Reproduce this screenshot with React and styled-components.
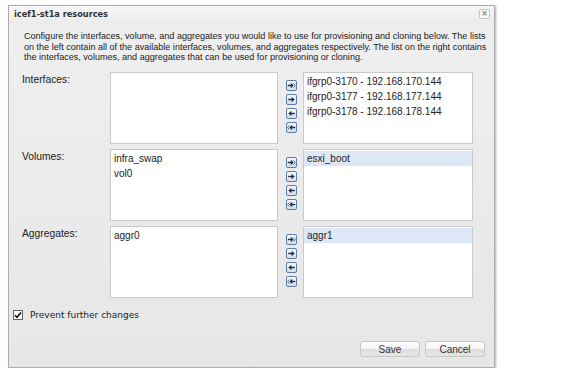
import React from 'react'
import styled, { createGlobalStyle } from 'styled-components'

const GlobalStyle = createGlobalStyle`
  html, body {
    margin: 0;
    background: #fff;
  }
  body {
    font-family: "Liberation Sans", Arial, sans-serif;
  }
`

const rows = [
  {
    label: 'Interfaces:',
    available: [],
    chosen: [
      'ifgrp0-3170 - 192.168.170.144',
      'ifgrp0-3177 - 192.168.177.144',
      'ifgrp0-3178 - 192.168.178.144',
    ],
    selected: -1,
  },
  { label: 'Volumes:', available: ['infra_swap', 'vol0'], chosen: ['esxi_boot'], selected: 0 },
  { label: 'Aggregates:', available: ['aggr0'], chosen: ['aggr1'], selected: 0 },
]

function MoveIcon({ dir, all }) {
  const flip = dir === 'left' ? 'translate(9 0) scale(-1 1)' : undefined
  return (
    <svg width="9" height="9" viewBox="0 0 9 9">
      <g transform={flip}>
        {all ? (
          <>
            <path d="M0.8 4.5H4.2" stroke="#1d2b3f" strokeWidth="1.4" />
            <polygon points="3.8,1.8 6.6,4.5 3.8,7.2" fill="#1d2b3f" />
            <polyline points="6.4,2.4 8.4,4.5 6.4,6.6" fill="none" stroke="#5b6b80" strokeWidth="1" />
          </>
        ) : (
          <>
            <path d="M1.2 4.5H5" stroke="#1d2b3f" strokeWidth="1.4" />
            <polygon points="4.6,1.8 7.6,4.5 4.6,7.2" fill="#1d2b3f" />
          </>
        )}
      </g>
    </svg>
  )
}

function ResourcesDialog() {
  return (
    <Dialog>
      <Header>
        <Title>icef1-st1a resources</Title>
        <Close>×</Close>
      </Header>
      <Body>
        <Description>
          Configure the interfaces, volume, and aggregates you would like to use for provisioning and cloning below. The lists
          <br />
          on the left contain all of the available interfaces, volumes, and aggregates respectively. The list on the right contains
          <br />
          the interfaces, volumes, and aggregates that can be used for provisioning or cloning.
        </Description>

        <Grid>
          {rows.map((row) => (
            <React.Fragment key={row.label}>
              <Label>{row.label}</Label>
              <ListBox>
                {row.available.map((item) => (
                  <Item key={item}>{item}</Item>
                ))}
              </ListBox>
              <Mover>
                <ArrowButton title="Add all"><MoveIcon dir="right" all /></ArrowButton>
                <ArrowButton title="Add"><MoveIcon dir="right" /></ArrowButton>
                <ArrowButton title="Remove"><MoveIcon dir="left" /></ArrowButton>
                <ArrowButton title="Remove all"><MoveIcon dir="left" all /></ArrowButton>
              </Mover>
              <ListBox>
                {row.chosen.map((item, i) => (
                  <Item key={item} $selected={i === row.selected}>{item}</Item>
                ))}
              </ListBox>
            </React.Fragment>
          ))}
        </Grid>
      </Body>

      <CheckRow>
        <Check>
          <svg width="8" height="8" viewBox="0 0 8 8">
            <polyline points="1,4.2 3,6.3 7,1.4" fill="none" stroke="#111" strokeWidth="1.6" />
          </svg>
        </Check>
        <CheckLabel>Prevent further changes</CheckLabel>
      </CheckRow>

      <Footer>
        <Button>Save</Button>
        <Button>Cancel</Button>
      </Footer>
    </Dialog>
  )
}

export default function App() {
  return (
    <Page>
      <GlobalStyle />
      <ResourcesDialog />
    </Page>
  )
}

const Page = styled.div`
  padding: 5px 0 0 8px;
`

const Dialog = styled.div`
  box-sizing: border-box;
  width: 487px;
  height: 363px;
  display: flex;
  flex-direction: column;
  border: 1px solid #acacac;
  background: linear-gradient(#efefef, #e7e7e7);
  box-shadow: 1px 1px 2px rgba(0, 0, 0, 0.3);
`

const Header = styled.div`
  height: 19px;
  display: flex;
  justify-content: space-between;
  align-items: flex-start;
  padding: 0 4px 0 5px;
  background: linear-gradient(#f6f6f6, #ebebeb);
`

const Title = styled.div`
  font-family: "DejaVu Sans", sans-serif;
  font-weight: bold;
  font-size: 8.2px;
  line-height: 17px;
  color: #333;
`

const Close = styled.div`
  box-sizing: border-box;
  margin-top: 3px;
  width: 11px;
  height: 10px;
  border: 1px solid #c4c4c4;
  border-radius: 2px;
  background: #f8f8f8;
  color: #666;
  font-size: 10px;
  line-height: 7px;
  text-align: center;
`

const Body = styled.div`
  padding: 6px 0 0 13px;
`

const Description = styled.p`
  margin: 0 0 0 2px;
  font-size: 9.05px;
  line-height: 10.6px;
  color: #222;
  white-space: nowrap;
`

const Grid = styled.div`
  margin-top: 9px;
  display: grid;
  grid-template-columns: 88px 168px 25px 170px;
  grid-auto-rows: 72px;
  row-gap: 5px;
`

const Label = styled.div`
  padding-top: 2px;
  font-size: 10.3px;
  line-height: 12px;
  color: #222;
`

const ListBox = styled.div`
  box-sizing: border-box;
  padding: 1px 0;
  background: #fff;
  border: 1px solid #c9c9c9;
  font-size: 10px;
  color: #222;
`

const Item = styled.div`
  height: 15px;
  line-height: 15px;
  padding: 0 3px;
  background: ${(p) => (p.$selected ? '#dde7f5' : 'transparent')};
`

const Mover = styled.div`
  display: flex;
  flex-direction: column;
  gap: 3px;
  padding: 8px 0 0 8px;
`

const ArrowButton = styled.button`
  box-sizing: border-box;
  width: 11px;
  height: 11px;
  padding: 0;
  display: flex;
  align-items: center;
  justify-content: center;
  border: 1px solid #5d7ea6;
  border-radius: 2px;
  background: linear-gradient(#f5f8fb, #d3deeb);
  cursor: pointer;
`

const CheckRow = styled.div`
  margin-top: 12px;
  padding-left: 4px;
  display: flex;
  align-items: center;
  gap: 7px;
`

const Check = styled.span`
  box-sizing: border-box;
  width: 10px;
  height: 10px;
  display: flex;
  align-items: center;
  justify-content: center;
  border: 1px solid #666;
  background: #fff;
`

const CheckLabel = styled.span`
  font-family: "DejaVu Sans", sans-serif;
  font-size: 9px;
  color: #222;
`

const Footer = styled.div`
  margin-top: auto;
  display: flex;
  justify-content: flex-end;
  gap: 5px;
  padding: 0 9px 10px 0;
`

const Button = styled.button`
  box-sizing: border-box;
  width: 60px;
  height: 16px;
  padding: 0;
  border: 1px solid #c6c6c6;
  border-radius: 3px;
  background: linear-gradient(#fdfdfd 0%, #f4f4f4 50%, #dddddd 51%, #e6e6e6 100%);
  font-family: "Liberation Sans", Arial, sans-serif;
  font-size: 10px;
  color: #333;
  cursor: pointer;
`
